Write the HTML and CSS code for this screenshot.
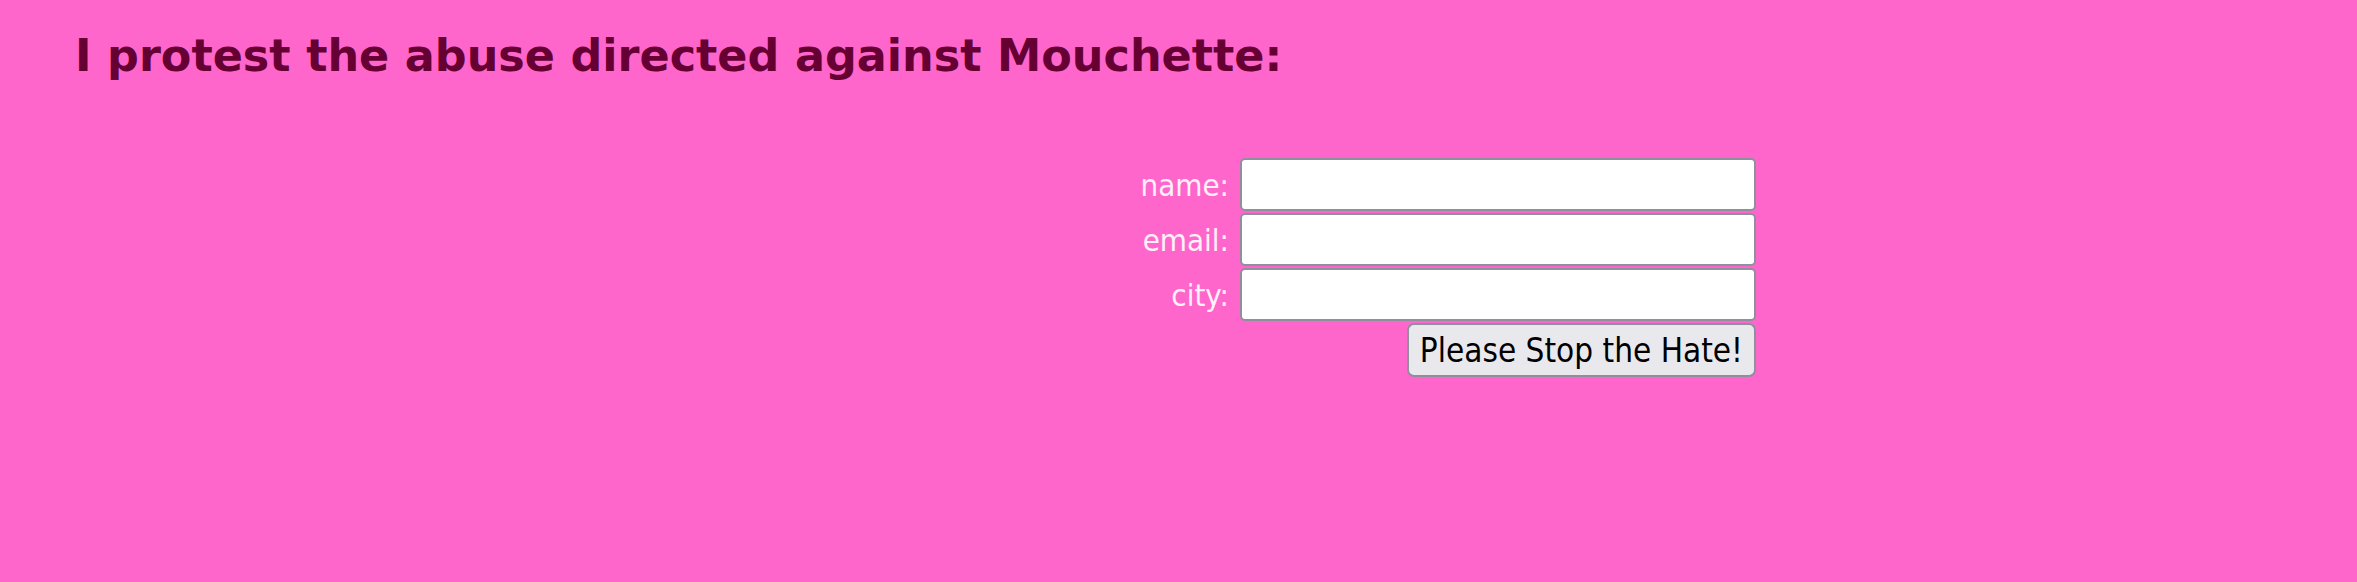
FILE: index.html
```html
<!DOCTYPE html>
<html>
<head>
<meta charset="utf-8">
<link rel="stylesheet" href="styles.css">
</head>
<body>
<h2 class="title">I protest the abuse directed against Mouchette:</h2>
<form class="protest">
  <label class="lbl" for="n">name:</label>
  <input class="field" id="n" type="text">
  <label class="lbl" for="e">email:</label>
  <input class="field" id="e" type="text">
  <label class="lbl" for="c">city:</label>
  <input class="field" id="c" type="text">
  <span></span>
  <div class="actions"><button class="btn" type="button">Please Stop the Hate!</button></div>
</form>
</body>
</html>
```
FILE: styles.css
```css
html, body {
  margin: 0;
  padding: 0;
  background: #ff66cc;
  width: 2357px;
  height: 582px;
  overflow: hidden;
}
body {
  font-family: "DejaVu Sans Condensed", "DejaVu Sans", sans-serif;
}
.title {
  margin: 0;
  padding: 28px 0 0 75px;
  font-family: "DejaVu Sans", sans-serif;
  font-size: 44.5px;
  line-height: 56px;
  font-weight: bold;
  color: #660033;
}
.protest {
  margin-top: 74px;
  display: grid;
  grid-template-columns: 1229px 516px;
  column-gap: 11px;
  row-gap: 2px;
  align-items: center;
}
.lbl {
  text-align: right;
  font-size: 31px;
  color: #fff0fa;
}
.field {
  box-sizing: border-box;
  height: 53px;
  width: 516px;
  margin: 0;
  border: 2px solid #8f8f9d;
  border-radius: 5px;
  background: #fff;
}
.actions {
  display: flex;
  justify-content: flex-end;
}
.btn {
  box-sizing: border-box;
  height: 54px;
  padding: 0 11px;
  margin: 0;
  font-family: "DejaVu Sans Condensed", "DejaVu Sans", sans-serif;
  font-size: 33px;
  color: #000;
  background: #e9e9ed;
  border: 2px solid #8f8f9d;
  border-radius: 7px;
}
```
